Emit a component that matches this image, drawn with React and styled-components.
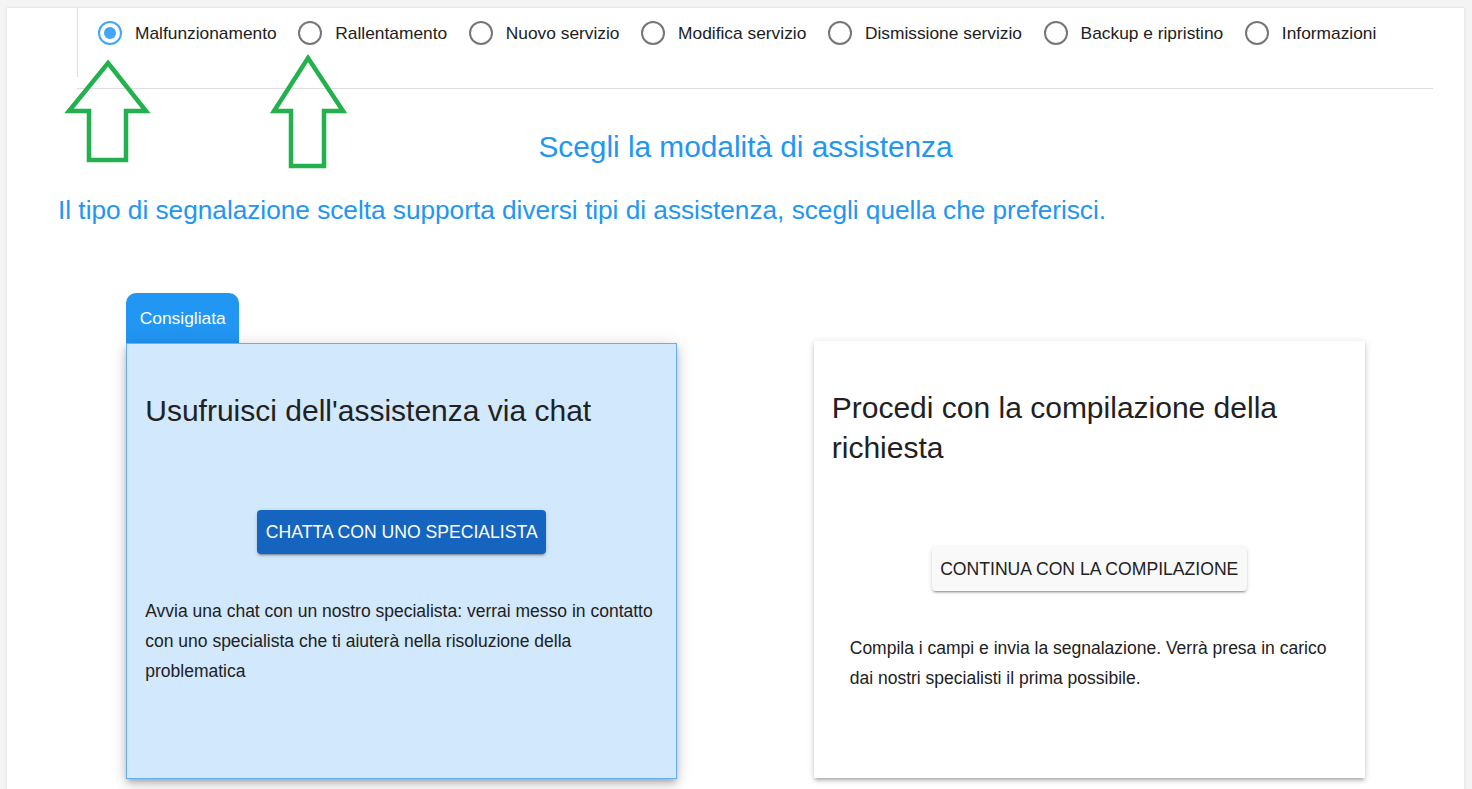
import React from "react";
import styled, { createGlobalStyle } from "styled-components";

const Global = createGlobalStyle`
  html, body { margin: 0; padding: 0; }
  body {
    background: #f4f4f4;
    font-family: "Liberation Sans", Arial, Helvetica, sans-serif;
    color: #212121;
  }
  * { box-sizing: border-box; }
`;

const Page = styled.div`
  position: relative;
  padding: 8px 8px 0 7px;
  min-height: 100vh;
`;

const Panel = styled.main`
  background: #ffffff;
  min-height: calc(100vh - 8px);
  padding: 0 31px 40px 51px;
  box-shadow: 0 0 3px rgba(0, 0, 0, 0.12);
`;

const RadioGroup = styled.div`
  display: flex;
  align-items: flex-start;
  gap: 21.6px;
  height: 69px;
  margin-left: 19px;
  padding: 13px 0 0 20px;
  border-left: 1px solid #dedede;
`;

const RadioItem = styled.label`
  display: flex;
  align-items: center;
  gap: 13px;
  height: 24px;
  font-size: 17.35px;
  color: #212121;
  white-space: nowrap;
  cursor: pointer;
`;

const RadioCircle = styled.span`
  flex: none;
  width: 24px;
  height: 24px;
  border-radius: 50%;
  border: 2px solid ${(p) => (p.$checked ? "#42a5f5" : "#767676")};
  display: flex;
  align-items: center;
  justify-content: center;
  &::after {
    content: "";
    width: 12px;
    height: 12px;
    border-radius: 50%;
    background: ${(p) => (p.$checked ? "#42a5f5" : "transparent")};
  }
`;

const Divider = styled.hr`
  margin: 11px 0 0 19px;
  border: 0;
  border-top: 1px solid #dddddd;
`;

const Heading = styled.h2`
  margin: 40px 0 0;
  text-align: center;
  font-weight: 400;
  font-size: 29.8px;
  line-height: 36px;
  color: #2196f3;
`;

const Subtitle = styled.p`
  margin: 29px 0 0;
  font-size: 26.2px;
  line-height: 32px;
  color: #2196f3;
`;

const Cards = styled.section`
  margin-top: 67px;
  display: grid;
  grid-template-columns: 1fr 1fr;
  justify-items: center;
  align-items: start;
`;

const Column = styled.div`
  width: 551px;
  display: flex;
  flex-direction: column;
  align-items: flex-start;
  padding-top: ${(p) => p.$offset || 0}px;
`;

const Tab = styled.div`
  width: 113px;
  height: 50px;
  border-radius: 10px 10px 0 0;
  background: #2196f3;
  color: #ffffff;
  font-size: 17.4px;
  display: flex;
  align-items: center;
  justify-content: center;
`;

const Card = styled.article`
  width: 551px;
  height: ${(p) => p.$height}px;
  padding: 47px 18px 0;
  background: ${(p) => (p.$featured ? "#d2e8fc" : "#ffffff")};
  border: ${(p) => (p.$featured ? "1px solid #64b0f2" : "none")};
  box-shadow: ${(p) =>
    p.$featured
      ? "0 3px 5px -1px rgba(0,0,0,0.2), 0 6px 10px 0 rgba(0,0,0,0.14), 0 1px 18px 0 rgba(0,0,0,0.12)"
      : "0 3px 3px -2px rgba(0,0,0,0.2), 0 3px 4px 0 rgba(0,0,0,0.14), 0 1px 8px 0 rgba(0,0,0,0.12)"};
`;

const CardTitle = styled.h3`
  margin: 0;
  font-weight: 400;
  font-size: 30px;
  line-height: 40px;
  color: #212121;
`;

const ButtonRow = styled.div`
  margin-top: 79px;
  display: flex;
  justify-content: center;
`;

const ActionButton = styled.button`
  height: 44px;
  padding: 0 8.5px;
  border: 0;
  border-radius: 4px;
  font-family: "Liberation Sans", Arial, sans-serif;
  font-size: 17.6px;
  text-transform: uppercase;
  cursor: pointer;
  background: ${(p) => (p.$primary ? "#1565c0" : "#f9f9f9")};
  color: ${(p) => (p.$primary ? "#ffffff" : "#212121")};
  box-shadow: 0 3px 1px -2px rgba(0,0,0,0.2), 0 2px 2px 0 rgba(0,0,0,0.14), 0 1px 5px 0 rgba(0,0,0,0.12);
`;

const CardText = styled.p`
  margin: 42px 0 0;
  padding: 0 ${(p) => p.$inset || 0}px;
  font-size: 17.5px;
  line-height: 30px;
  color: #212121;
`;

const Annotations = styled.svg`
  position: absolute;
  left: 0;
  top: 0;
  width: 400px;
  height: 200px;
  pointer-events: none;
  overflow: visible;
`;

const options = [
  "Malfunzionamento",
  "Rallentamento",
  "Nuovo servizio",
  "Modifica servizio",
  "Dismissione servizio",
  "Backup e ripristino",
  "Informazioni",
];

export default function App() {
  const [selected, setSelected] = React.useState(0);
  return (
    <>
      <Global />
      <Page>
        <Panel>
          <RadioGroup role="radiogroup">
            {options.map((o, i) => (
              <RadioItem key={o} onClick={() => setSelected(i)}>
                <RadioCircle $checked={selected === i} />
                {o}
              </RadioItem>
            ))}
          </RadioGroup>
          <Divider />
          <Heading>Scegli la modalità di assistenza</Heading>
          <Subtitle>
            Il tipo di segnalazione scelta supporta diversi tipi di assistenza, scegli quella che preferisci.
          </Subtitle>
          <Cards>
            <Column>
              <Tab>Consigliata</Tab>
              <Card $featured $height={436}>
                <CardTitle>Usufruisci dell'assistenza via chat</CardTitle>
                <ButtonRow>
                  <ActionButton $primary>Chatta con uno specialista</ActionButton>
                </ButtonRow>
                <CardText>
                  Avvia una chat con un nostro specialista: verrai messo in contatto con uno specialista che ti aiuterà nella risoluzione della problematica
                </CardText>
              </Card>
            </Column>
            <Column $offset={48}>
              <Card $height={437}>
                <CardTitle>Procedi con la compilazione della richiesta</CardTitle>
                <ButtonRow>
                  <ActionButton>Continua con la compilazione</ActionButton>
                </ButtonRow>
                <CardText $inset={18}>
                  Compila i campi e invia la segnalazione. Verrà presa in carico dai nostri specialisti il prima possibile.
                </CardText>
              </Card>
            </Column>
          </Cards>
        </Panel>
        <Annotations viewBox="0 0 400 200">
          <polygon
            points="108,63 146,111 126,111 126,160 89,160 89,111 69,111"
            fill="none"
            stroke="#22b14c"
            strokeWidth="4.5"
            strokeLinejoin="miter"
          />
          <polygon
            points="308,58 343,111 324,111 324,166 291,166 291,111 274,111"
            fill="none"
            stroke="#22b14c"
            strokeWidth="4.5"
            strokeLinejoin="miter"
          />
        </Annotations>
      </Page>
    </>
  );
}
